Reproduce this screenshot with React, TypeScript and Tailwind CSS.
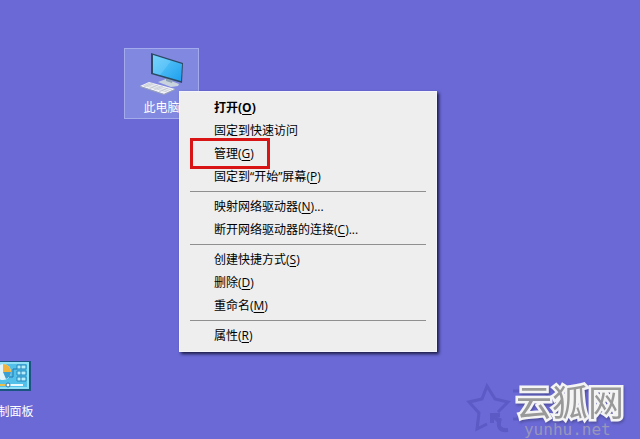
import React from "react";

type MenuEntry = {
  before: string;
  accessKey: string;
  after?: string;
  bold?: boolean;
  marked?: boolean;
};

const menuGroups: MenuEntry[][] = [
  [
    { before: "打开", accessKey: "O", bold: true },
    { before: "固定到快速访问", accessKey: "" },
    { before: "管理", accessKey: "G", marked: true },
    { before: "固定到“开始”屏幕", accessKey: "P" },
  ],
  [
    { before: "映射网络驱动器", accessKey: "N", after: "..." },
    { before: "断开网络驱动器的连接", accessKey: "C", after: "..." },
  ],
  [
    { before: "创建快捷方式", accessKey: "S" },
    { before: "删除", accessKey: "D" },
    { before: "重命名", accessKey: "M" },
  ],
  [{ before: "属性", accessKey: "R" }],
];

const MenuItem: React.FC<{ item: MenuEntry }> = ({ item }) => (
  <button
    role="menuitem"
    className={`relative block w-full pl-[34px] text-left text-[12px] leading-[23px] whitespace-nowrap text-black ${
      item.bold ? "font-bold" : ""
    }`}
  >
    {item.before}
    {item.accessKey && (
      <>
        (<u className="underline-offset-2">{item.accessKey}</u>)
      </>
    )}
    {item.after}
    {/* Red frame around the highlighted entry */}
    {item.marked && (
      <span className="absolute -inset-y-1 left-[10px] w-20 border-3 border-[#d81414]" />
    )}
  </button>
);

const ContextMenu: React.FC = () => (
  <div
    role="menu"
    className="absolute top-[91px] left-[179px] w-[258px] border border-[#f4f4fc] bg-[#eeeeee] py-1 shadow-[2px_2px_3px_rgba(0,0,20,0.75)]"
  >
    {menuGroups.map((group, i) => (
      <div key={i}>
        {i > 0 && <hr className="mx-[10px] my-[3px] border-t border-[#8f8f8f]" />}
        {group.map((item) => (
          <MenuItem key={item.before} item={item} />
        ))}
      </div>
    ))}
  </div>
);

const ComputerIcon: React.FC = () => (
  <svg width="48" height="48" viewBox="0 0 48 48" aria-hidden="true">
    <defs>
      <linearGradient id="screen" x1="0" y1="0" x2="1" y2="1">
        <stop offset="0" stopColor="#6bd0fb" />
        <stop offset="1" stopColor="#1d9fee" />
      </linearGradient>
    </defs>
    <path d="M20 33 28 30 41 35 40 37 33 38z" fill="#c9d3dd" />
    <path d="M28 28h7l-1 6-6-2z" fill="#8da1b5" />
    <path d="M13 4 45 14 44 34 13 25z" fill="#2c4a66" />
    <path d="M15 6 44 15 43 32 15 24z" fill="url(#screen)" />
    <path d="M15 6 33 12 22 26 15 24z" fill="#8fdcff" opacity=".3" />
    <path d="M2 37 11 33 37 40 26 45z" fill="#f2f3f6" />
    <path d="M2 37 26 45 37 40v1L26 46 2 38z" fill="#9aa3b6" />
    <path
      d="M5 36 29 43M7 35 31 42M9 34 34 41M6 38 15 34M11 40 20 36M16 41 25 37M21 43 30 39"
      stroke="#b9c0cb"
      strokeWidth=".6"
    />
  </svg>
);

const ControlPanelIcon: React.FC = () => (
  <svg width="48" height="48" viewBox="0 0 48 48" aria-hidden="true">
    <path d="M0 9h45v30H0z" fill="#1b5682" />
    <path d="M0 10h43v27H0z" fill="#8fe0f7" />
    <path d="M0 12h41v23H0z" fill="#52c0e8" />
    <circle cx="17" cy="20" r="8" fill="#e3f5fb" />
    <path d="M17 20v-8a8 8 0 0 1 8 8z" fill="#f2b23e" />
    <path d="M17 20h8a8 8 0 0 1-5 7z" fill="#3c9fd2" />
    <path d="M23 25h4v-8h4" fill="none" stroke="#2379b0" />
    <path d="M0 33h37" stroke="#e8f9fd" strokeWidth="2" />
    <path d="M0 33h20" stroke="#e9bd4e" strokeWidth="2" />
    <circle cx="22" cy="33" r="2" fill="#fff" stroke="#2379b0" />
    <path
      d="M31 13h9v4h-9zM31 19h9v4h-9zM31 25h9v4h-9zM35 13v4M35 19v4M35 25v4"
      fill="#b3ecfb"
      stroke="#2787bd"
    />
  </svg>
);

const Watermark: React.FC = () => (
  <div className="absolute right-4 bottom-0">
    <svg
      className="absolute right-0 bottom-1"
      width="160"
      height="54"
      viewBox="0 0 160 54"
      aria-hidden="true"
      fill="none"
      stroke="#5c5ac4"
      strokeWidth="3"
    >
      <path d="M23 43 13 48 15 32 5 21 18 18 23 5 31 18 44 21 34 31" />
      <path d="m28 34 8 7M28 42v-8h8M36 37c-3 9 0 13 8 12" strokeWidth="4" />
      <path d="M49 10h6M49 38h6M78 9l6 5M80 36h8M116 10h6M118 37h6" />
    </svg>
    <div className="relative text-[36px] leading-9 font-normal text-[#999999] [paint-order:stroke_fill] [-webkit-text-stroke:5px_#f4f4f4] drop-shadow-[1px_2px_1px_rgba(60,60,110,0.5)]">
      云狐网
    </div>
    <div className="relative pl-2 font-['DejaVu_Sans_Mono',monospace] text-[16px] leading-[18px] text-[#9896bb]">
      yunhu.net
    </div>
  </div>
);

const App: React.FC = () => {
  return (
    <main className="relative min-h-screen overflow-hidden bg-[#6a69d6] font-['Open_Sans','Noto_Sans_CJK_SC',sans-serif]">
      {/* Desktop icons */}
      <button className="absolute top-12 left-[124px] flex w-[75px] flex-col items-center border border-[#a3abed] bg-[#8188e0] text-[12px] leading-5 text-white">
        <ComputerIcon />
        <span className="pt-[1px]">此电脑</span>
      </button>
      <button className="absolute top-[352px] -left-7 flex w-[75px] flex-col items-center text-[12px] leading-6 text-white">
        <ControlPanelIcon />
        控制面板
      </button>

      <ContextMenu />
      <Watermark />
    </main>
  );
};

export default App;
